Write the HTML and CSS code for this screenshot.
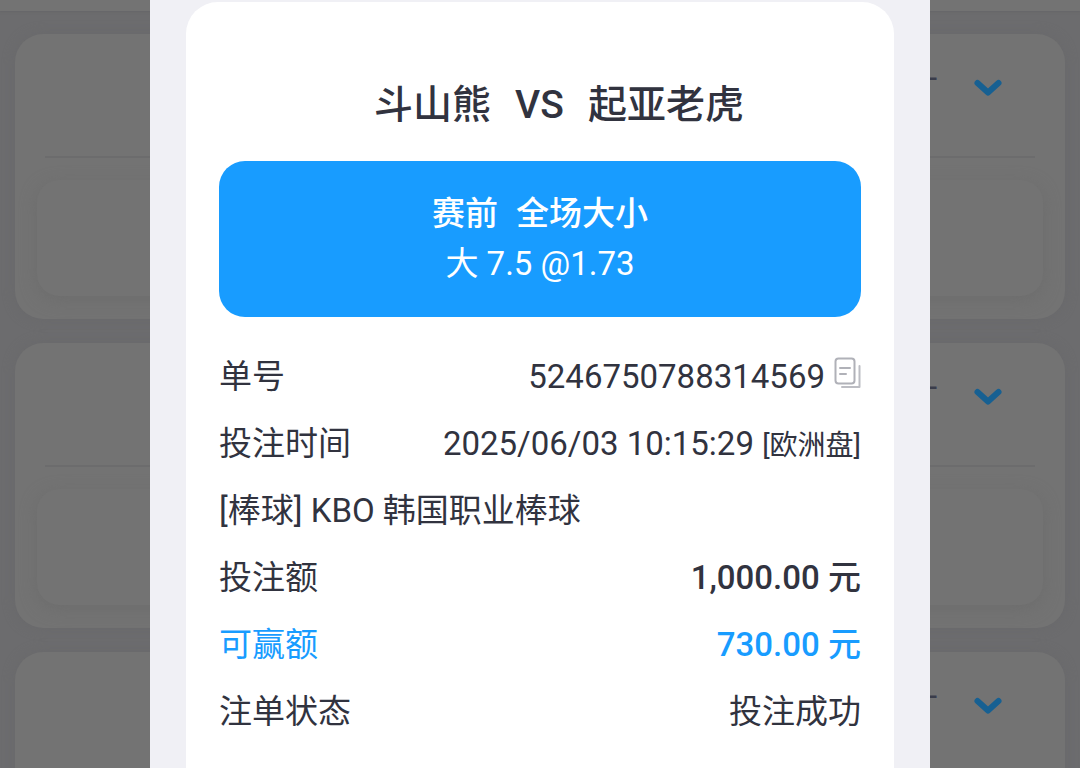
FILE: index.html
```html
<!DOCTYPE html>
<html lang="zh-CN">
<head>
    <meta charset="UTF-8">
    <meta name="viewport" content="width=device-width, initial-scale=1.0">
    <title>注单详情</title>
    <link rel="stylesheet" href="styles.css">
</head>
<body>
    <header class="topbar"></header>
    <main class="bet-list">
        <section class="bet-card">
            <div class="bet-head">
                <span class="bet-time">-</span>
                <button class="toggle-btn" type="button" aria-label="展开">
                    <svg viewBox="0 0 30 22"><path d="M4.500 6 L15 15.500 L25.500 6"/></svg>
                </button>
            </div>
            <div class="bet-body"></div>
        </section>
        <section class="bet-card">
            <div class="bet-head">
                <span class="bet-time">-</span>
                <button class="toggle-btn" type="button" aria-label="展开">
                    <svg viewBox="0 0 30 22"><path d="M4.500 6 L15 15.500 L25.500 6"/></svg>
                </button>
            </div>
            <div class="bet-body"></div>
        </section>
        <section class="bet-card">
            <div class="bet-head">
                <span class="bet-time">-</span>
                <button class="toggle-btn" type="button" aria-label="展开">
                    <svg viewBox="0 0 30 22"><path d="M4.500 6 L15 15.500 L25.500 6"/></svg>
                </button>
            </div>
            <div class="bet-body"></div>
        </section>
    </main>

    <!-- Bet slip dialog -->
    <div class="dialog" role="dialog" aria-labelledby="match-title">
        <div class="slip">
            <h1 class="match" id="match-title">
                <span>斗山熊</span>
                <span>VS</span>
                <span>起亚老虎</span>
            </h1>
            <div class="pick">
                <h2 class="market"><span>赛前</span><span>全场大小</span></h2>
                <p class="odds">大 7.5 @1.73</p>
            </div>
            <dl class="details">
                <div class="row">
                    <dt>单号</dt>
                    <dd class="order-no">
                        <span>5246750788314569</span>
                        <button class="copy-btn" type="button" aria-label="复制单号">
                            <svg viewBox="0 0 27 32">
                                <rect x="1.500" y="1.500" width="19" height="25" rx="3"/>
                                <path d="M6 11 H16 M6 17 H12"/>
                                <path class="back" d="M25.500 9 V30 H8"/>
                            </svg>
                        </button>
                    </dd>
                </div>
                <div class="row">
                    <dt>投注时间</dt>
                    <dd>2025/06/03 10:15:29 <small>[欧洲盘]</small></dd>
                </div>
                <div class="row">
                    <dt>[棒球] KBO 韩国职业棒球</dt>
                </div>
                <div class="row">
                    <dt>投注额</dt>
                    <dd class="amount">1,000.00 元</dd>
                </div>
                <div class="row win">
                    <dt>可赢额</dt>
                    <dd class="amount">730.00 元</dd>
                </div>
                <div class="row">
                    <dt>注单状态</dt>
                    <dd>投注成功</dd>
                </div>
            </dl>
        </div>
    </div>
</body>
</html>
```

FILE: styles.css
```css
* {
    box-sizing: border-box;
}

body {
    margin: 0;
    height: 100vh;
    overflow: hidden;
    background-color: #6c6c6e;
    color: #31333f;
    font-family: Roboto, "Noto Sans CJK SC", sans-serif;
    font-size: 33px;
}

h1, h2, p, dl, dd {
    margin: 0;
}

button {
    padding: 0;
    border: none;
    background: none;
    cursor: pointer;
}

svg {
    display: block;
    fill: none;
    stroke-linecap: round;
    stroke-linejoin: round;
}

.topbar {
    height: 11px;
    background-color: #737373;
    box-shadow: 0 1px 2px #666668;
}

/* Dimmed list behind the dialog */
.bet-list {
    display: flex;
    flex-direction: column;
    gap: 24px;
    height: calc(100vh - 11px);
    padding: 23px 15px 0;
    overflow: hidden;
}

.bet-card {
    flex: none;
    padding: 0 22px 23px;
    border-radius: 28px;
    background-color: #737373;
    box-shadow: 0 0 12px #69696b;
}

.bet-head {
    display: flex;
    justify-content: flex-end;
    gap: 36px;
    height: 124px;
    margin: 0 8px 22px;
    padding: 24px 32px 0 0;
    border-bottom: 2px solid #6c6c6d;
}

.bet-time {
    color: #3a3c4a;
    line-height: 40px;
}

.toggle-btn {
    width: 30px;
    height: 60px;
}

.toggle-btn svg {
    width: 30px;
    height: 22px;
    stroke: #176092;
    stroke-width: 6px;
}

.bet-body {
    height: 116px;
    border-radius: 22px;
    background-color: #737373;
    box-shadow: 0 4px 16px #6d6d6d;
}

/* Dialog */
.dialog {
    position: fixed;
    inset: 0;
    width: 780px;
    max-width: 100%;
    margin: 0 auto;
    padding: 2px 36px 0;
    overflow: hidden;
    background-color: #f0f0f5;
}

.slip {
    height: 100%;
    padding: 73px 33px 0;
    overflow: hidden;
    border-radius: 32px 32px 0 0;
    background-color: #fff;
}

.match {
    display: flex;
    justify-content: center;
    gap: 24px;
    height: 60px;
    margin-bottom: 26px;
    padding-left: 38px;
    font-size: 39px;
    font-weight: 500;
    line-height: 60px;
}

.pick {
    padding: 28px;
    border-radius: 26px;
    background-color: #189cff;
    color: #fff;
    text-align: center;
    line-height: 50px;
}

.market {
    display: flex;
    justify-content: center;
    gap: 18px;
    font-size: 33px;
    font-weight: 500;
}

.odds {
    height: 50px;
}

.details {
    margin-top: 26px;
}

.row {
    display: flex;
    justify-content: space-between;
    height: 67px;
    line-height: 67px;
}

.row small {
    font-size: 28px;
}

.order-no {
    display: flex;
    align-items: center;
    gap: 9px;
}

.copy-btn {
    padding-bottom: 8px;
}

.copy-btn svg {
    width: 27px;
    height: 32px;
    stroke: #b0b1b8;
    stroke-width: 2px;
}

.copy-btn .back {
    stroke: #bcbdc3;
}

.amount {
    font-weight: 500;
}

.win {
    color: #189cff;
}
```
